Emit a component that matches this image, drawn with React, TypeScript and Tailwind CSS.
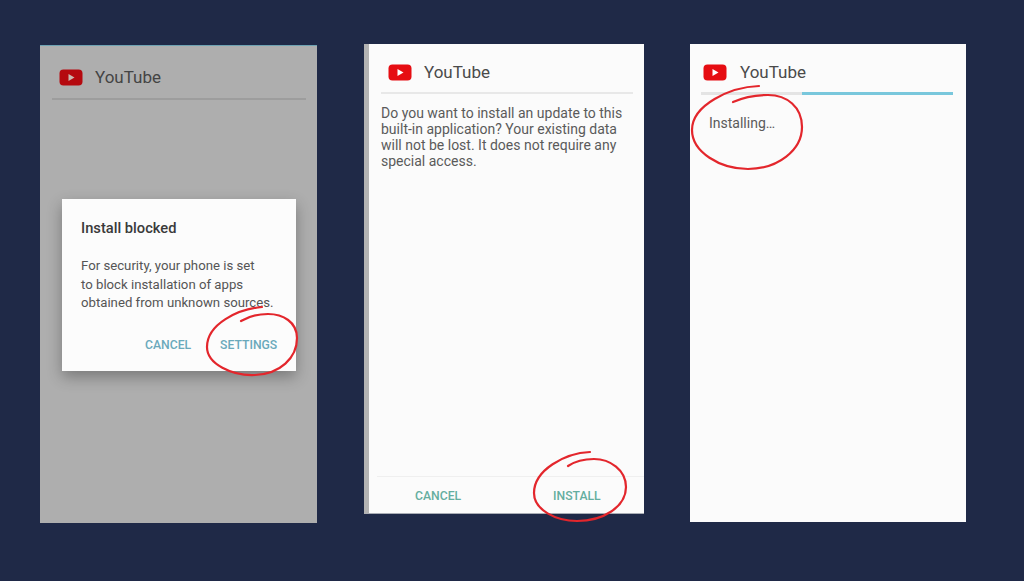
import React from "react";

const font = { fontFamily: "Roboto, sans-serif" };

function Logo({ dim }: { dim?: boolean }) {
  return (
    <svg width="24" height="17" viewBox="0 0 24 17" className="shrink-0">
      <rect x="0.5" y="0.5" width="23" height="16" rx="4" fill={dim ? "#b5090f" : "#e60d12"} />
      <path d="M9.5 5 L15.5 8.5 L9.5 12 Z" fill={dim ? "#c9b8b0" : "#ffffff"} />
    </svg>
  );
}

function Header({ dim, className }: { dim?: boolean; className: string }) {
  return (
    <div className={`flex items-center ${className}`}>
      <Logo dim={dim} />
      <span className={`text-[17px] leading-[22px] ${dim ? "text-[#444444]" : "text-[#4a4a4a]"}`}>YouTube</span>
    </div>
  );
}

export default function App() {
  return (
    <div className="relative w-[1024px] h-[581px] overflow-hidden bg-[#1f2947] flex items-start pl-10 pt-[44px]" style={font}>
      {/* Panel 1 */}
      <div className="relative w-[277px] h-[478px] bg-[#aeaeae] border-t border-[#6ea3b3] mt-[1px]">
        <Header dim className="gap-[12px] pl-[19px] pt-[20px]" />
        <div className="ml-3 mr-[11px] mt-[10px] h-[2px] bg-[#9d9d9d]" />
        <div className="absolute left-[22px] top-[153px] w-[234px] h-[172px] bg-[#fcfcfc] shadow-[0_6px_14px_rgba(0,0,0,0.3)] pl-[19px] pt-[20px] flex flex-col">
          <div className="text-[14.7px] leading-[18px] font-medium text-[#3a3a3a]">Install blocked</div>
          <div className="mt-[20px] text-[13.2px] leading-[18.5px] text-[#555555] whitespace-nowrap">
            <div>For security, your phone is set</div>
            <div>to block installation of apps</div>
            <div>obtained from unknown sources.</div>
          </div>
          <div className="flex gap-[29px] mt-[24px] pl-[64px] text-[12.2px] leading-[16px] font-medium text-[#6aa9bb]">
            <span>CANCEL</span>
            <span>SETTINGS</span>
          </div>
        </div>
      </div>

      {/* Panel 2 */}
      <div className="ml-[47px] w-[280px] h-[470px] bg-[#fbfbfb] border-l-[5px] border-[#b3b3b3] border-b border-b-[#a9adb5] flex flex-col">
        <Header className="gap-[12px] pl-[19px] pt-[17px]" />
        <div className="ml-3 mr-[11px] mt-[9px] h-[2px] bg-[#e8e8e8]" />
        <div className="px-3 mt-[11px] text-[14px] leading-[16px] text-[#5a5a5a] whitespace-nowrap">
          <div>Do you want to install an update to this</div>
          <div>built-in application? Your existing data</div>
          <div>will not be lost. It does not require any</div>
          <div>special access.</div>
        </div>
        <div className="mt-auto border-t border-[#efefef] ml-2 h-[37px] pt-[3px] flex items-center text-[12.2px] font-medium text-[#64ae9f]">
          <span className="ml-[38px]">CANCEL</span>
          <span className="ml-[92px]">INSTALL</span>
        </div>
      </div>

      {/* Panel 3 */}
      <div className="ml-[46px] w-[276px] h-[478px] bg-[#fbfbfb] flex flex-col">
        <Header className="gap-[13px] pl-[13px] pt-[17px]" />
        <div className="ml-[11px] mr-[13px] mt-[9px] h-[3px] bg-[#e4e4e4]">
          <div className="ml-[101px] h-full bg-[#79c7dc]" />
        </div>
        <div className="pl-[19px] mt-[19px] text-[14px] leading-[18px] text-[#5a5a5a]">Installing…</div>
      </div>

      {/* Red hand-drawn circles */}
      <svg className="absolute left-0 top-0 pointer-events-none" width="1024" height="581" viewBox="0 0 1024 581" fill="none" stroke="#e3262c" strokeWidth="2.2" strokeLinecap="round">
        <path d="M262 307 C238 309 207 324 207 347 C207 364 232 376 255 375 C280 374 297 358 297 338 C297 322 283 314 268 314 C257 314 248 317 241 321" />
        <path d="M590 452 C565 453 534 470 534 493 C534 510 556 521 577 521 C603 521 626 507 626 487 C626 470 610 459 594 459 C583 459 574 462 568 466" />
        <path d="M759 86 C730 87 692 105 692 130 C692 152 720 169 748 169 C778 169 802 150 802 127 C802 107 787 95 768 95 C755 95 742 98 733 102" />
      </svg>
    </div>
  );
}
